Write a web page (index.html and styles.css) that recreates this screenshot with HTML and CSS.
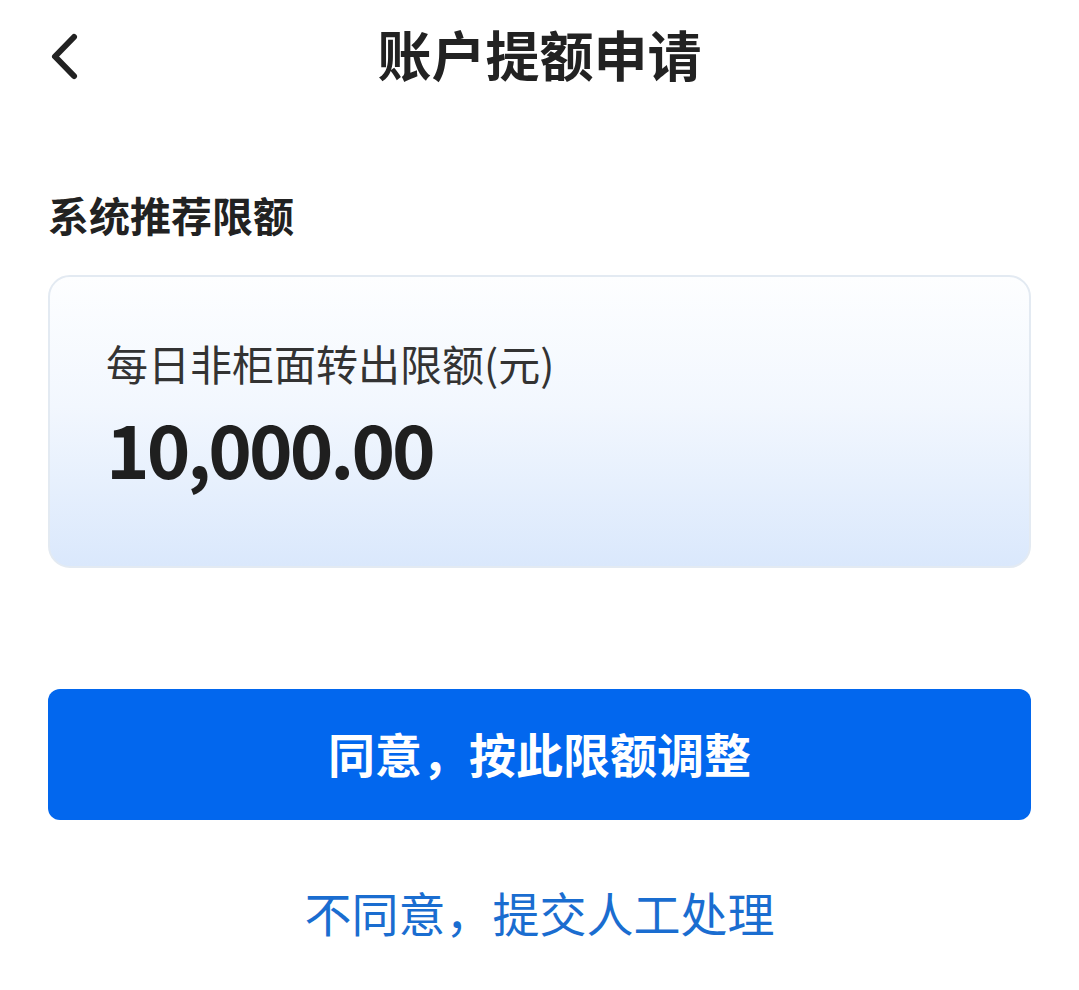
FILE: index.html
```html
<!DOCTYPE html>
<html>
<head>
    <meta charset="utf-8">
    <title>账户提额申请</title>
    <link rel="stylesheet" href="styles.css">
</head>
<body>
    <div class="page">
        <div class="nav">
            <a class="back" href="#">
                <svg width="30" height="50" viewBox="0 0 30 50">
                    <path d="M24 5 L5 24.5 L24 44" fill="none" stroke="#222" stroke-width="6" stroke-linecap="round" stroke-linejoin="round"/>
                </svg>
            </a>
            <h1 class="title">账户提额申请</h1>
            <span></span>
        </div>

        <h3 class="section-label">系统推荐限额</h3>

        <div class="limit-card">
            <div class="limit-name">每日非柜面转出限额(元)</div>
            <div class="limit-amount">10,000.00</div>
        </div>

        <button class="agree-btn" type="button">同意，按此限额调整</button>
        <a class="manual-link" href="#">不同意，提交人工处理</a>
    </div>
</body>
</html>
```

FILE: styles.css
```css
* {
    box-sizing: border-box;
}
body {
    margin: 0;
    background: #fff;
    font-family: "Noto Sans CJK SC", "Noto Sans", sans-serif;
    color: #222;
}
.page {
    padding: 0 48px;
}
.nav {
    display: grid;
    grid-template-columns: 1fr auto 1fr;
    align-items: center;
    height: 108px;
}
.back {
    display: flex;
    margin-left: 2px;
    margin-top: 6px;
}
.title {
    margin: 0;
    font-size: 54px;
    font-weight: 700;
    line-height: 70px;
    color: #222;
}
.section-label {
    margin: 77px 0 31px;
    font-size: 41px;
    font-weight: 700;
    line-height: 59px;
    color: #222;
}
.limit-card {
    border: 2px solid #e3eaf2;
    border-radius: 22px;
    padding: 58px 56px 74px;
    background: linear-gradient(180deg, #fdfeff 0%, #f2f7fe 45%, #dae8fc 100%);
}
.limit-name {
    font-size: 42px;
    line-height: 56px;
    color: #333;
}
.limit-amount {
    margin-top: 11px;
    font-size: 74px;
    font-weight: 700;
    line-height: 90px;
    letter-spacing: -3px;
    color: #1f1f1f;
}
.agree-btn {
    display: block;
    width: 100%;
    height: 131px;
    margin-top: 121px;
    border: none;
    border-radius: 12px;
    background: #0267ee;
    color: #fff;
    font-family: inherit;
    font-size: 47px;
    font-weight: 700;
    line-height: 1;
    padding: 0 0 4px;
}
.manual-link {
    display: block;
    margin-top: 59px;
    text-align: center;
    font-size: 47px;
    line-height: 66px;
    color: #1a6dd0;
    text-decoration: none;
}
```
